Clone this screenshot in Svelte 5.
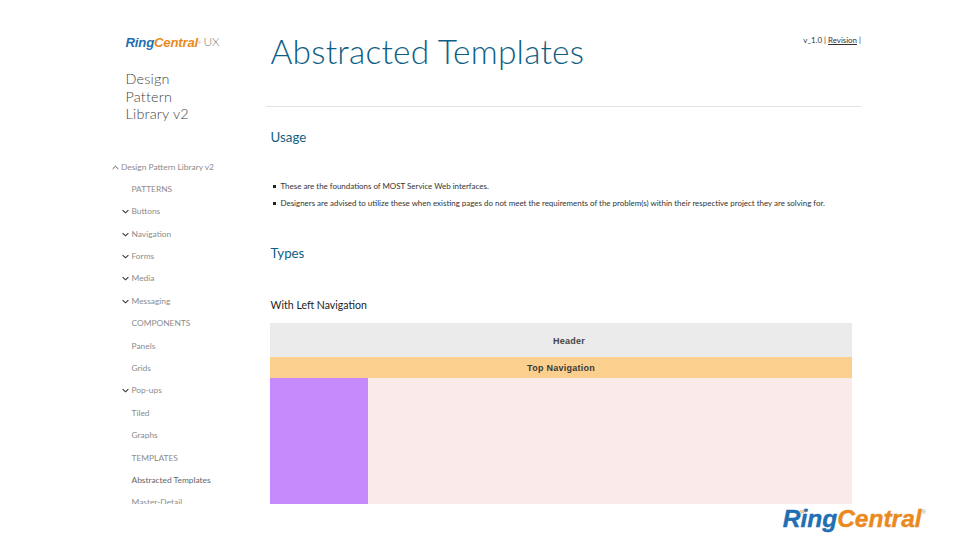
<script>
  const nav = [
    { t: 'PATTERNS', c: false },
    { t: 'Buttons', c: true },
    { t: 'Navigation', c: true },
    { t: 'Forms', c: true },
    { t: 'Media', c: true },
    { t: 'Messaging', c: true },
    { t: 'COMPONENTS', c: false },
    { t: 'Panels', c: false },
    { t: 'Grids', c: false },
    { t: 'Pop-ups', c: true },
    { t: 'Tiled', c: false },
    { t: 'Graphs', c: false },
    { t: 'TEMPLATES', c: false },
    { t: 'Abstracted Templates', c: false, active: true },
    { t: 'Master-Detail', c: false }
  ];
</script>

<div class="page">
  <div class="content">
    <aside class="sidebar">
      <div class="brand">
        <span class="rc"><span class="blue">Ring</span><span class="orange">Central</span></span><sup class="reg">®</sup>
        <span class="ux">UX</span>
      </div>
      <div class="lib">Design<br />Pattern<br />Library v2</div>
      <nav class="nav">
        <div class="row root">
          <svg class="chev" viewBox="0 0 8 5" width="7" height="5"><path d="M0.7 4.2 L4 1 L7.3 4.2" fill="none" stroke="#555" stroke-width="1.1" /></svg>
          <span>Design Pattern Library v2</span>
        </div>
        {#each nav as n}
          <div class="row item" class:active={n.active}>
            {#if n.c}
              <svg class="chev" viewBox="0 0 8 5" width="7" height="5"><path d="M0.7 0.8 L4 4 L7.3 0.8" fill="none" stroke="#333" stroke-width="1.2" /></svg>
            {/if}
            <span>{n.t}</span>
          </div>
        {/each}
      </nav>
    </aside>
    <main class="main">
      <header class="head">
        <h1>Abstracted Templates</h1>
        <div class="ver">v_1.0 | <u>Revision</u> |</div>
      </header>
      <section class="body">
        <h2 class="usage">Usage</h2>
        <ul>
          <li>These are the foundations of MOST Service Web interfaces.</li>
          <li>Designers are advised to utilize these when existing pages do not meet the requirements of the problem(s) within their respective project they are solving for.</li>
        </ul>
        <h2 class="types">Types</h2>
        <h3>With Left Navigation</h3>
        <div class="tpl">
          <div class="t-head">Header</div>
          <div class="t-nav">Top Navigation</div>
          <div class="t-main">
            <div class="t-left"></div>
          </div>
        </div>
      </section>
    </main>
  </div>
  <footer class="foot">
    <div class="logo">
      <svg class="arcs" viewBox="0 0 10 6" width="9" height="5"><path d="M1 4 Q5 0 9 4 M3 5 Q5 3 7 5" fill="none" stroke="#ea8a1e" stroke-width="1" /></svg>
      <span class="blue">Ring</span><span class="orange">Central</span><sup>®</sup>
    </div>
  </footer>
</div>

<style>
  :global(body) {
    margin: 0;
    background: #fff;
  }
  .page {
    width: 960px;
    height: 540px;
    overflow: hidden;
    font-family: Lato, "Liberation Sans", sans-serif;
    display: flex;
    flex-direction: column;
  }
  .content {
    height: 504px;
    overflow: hidden;
    display: flex;
    flex: none;
  }
  .sidebar {
    width: 266px;
    flex: none;
    box-sizing: border-box;
    padding-top: 35px;
  }
  .brand {
    margin-left: 125.5px;
    height: 14px;
    line-height: 14px;
    white-space: nowrap;
    display: flex;
    align-items: center;
  }
  .rc {
    font: italic 700 13.2px "Liberation Sans", sans-serif;
    letter-spacing: -0.2px;
  }
  .blue { color: #1f6fb2; }
  .orange { color: #ea8a1e; }
  .reg {
    font-size: 4px;
    color: #999;
    align-self: flex-start;
    margin-top: 1px;
  }
  .ux {
    font-size: 12px;
    font-weight: 300;
    color: #777;
    margin-left: 2px;
  }
  .lib {
    margin: 21px 0 0 125.5px;
    font-size: 14.4px;
    line-height: 17.5px;
    font-weight: 300;
    color: #444;
    letter-spacing: 0.2px;
  }
  .nav {
    margin-top: 33px;
    font-size: 8.4px;
    font-weight: 400;
    color: #8c8c8c;
  }
  .row {
    height: 22.4px;
    line-height: 22.4px;
    position: relative;
    white-space: nowrap;
  }
  .root { padding-left: 121px; }
  .item { padding-left: 131.5px; }
  .chev {
    position: absolute;
    top: 9px;
  }
  .root .chev { left: 111.5px; }
  .item .chev { left: 122px; }
  .active { color: #666; }
  .main {
    flex: 1;
    min-width: 0;
  }
  .head {
    width: 595px;
    height: 107px;
    box-sizing: border-box;
    border-bottom: 1px solid #e2e2e2;
    position: relative;
    padding: 29px 0 0 4.5px;
  }
  h1 {
    margin: 0;
    font-size: 33.5px;
    line-height: 44px;
    font-weight: 300;
    color: #0f5f85;
    letter-spacing: 0.2px;
  }
  .ver {
    position: absolute;
    right: 0;
    top: 34px;
    font-size: 7.9px;
    line-height: 12px;
    color: #333;
  }
  .body {
    padding-left: 4px;
    width: 582px;
  }
  h2 {
    margin: 0 0 0 0.6px;
    font-size: 13.3px;
    line-height: 20px;
    font-weight: 400;
    color: #0f5f85;
  }
  .usage { margin-top: 20px; }
  ul {
    list-style: none;
    margin: 31px 0 0;
    padding: 0;
    font-size: 7.95px;
    line-height: 17px;
    color: #333;
    white-space: nowrap;
  }
  li {
    padding-left: 10.5px;
    position: relative;
  }
  li::before {
    content: "";
    position: absolute;
    left: 3px;
    top: 7px;
    width: 3px;
    height: 3px;
    background: #222;
  }
  .types { margin-top: 31px; }
  h3 {
    margin: 34px 0 0 0.6px;
    font-size: 10.56px;
    line-height: 16px;
    font-weight: 400;
    color: #1c1c1c;
  }
  .tpl {
    margin-top: 10px;
    font: 700 9px "Liberation Sans", sans-serif;
    letter-spacing: 0.25px;
    color: #444;
    text-align: center;
  }
  .t-head {
    height: 34px;
    line-height: 36px;
    background: #ebebeb;
    padding-left: 16px;
  }
  .t-nav {
    height: 21px;
    line-height: 23px;
    background: #fbd08f;
    color: #3a3a3a;
  }
  .t-main {
    height: 300px;
    background: #faeaea;
    display: flex;
  }
  .t-left {
    width: 97.5px;
    background: #c68afc;
  }
  .foot {
    flex: 1;
    display: flex;
    justify-content: flex-end;
    align-items: flex-start;
    padding: 1px 34px 0 0;
  }
  .logo {
    font: italic 700 24.5px/28px "Liberation Sans", sans-serif;
    -webkit-text-stroke: 0.4px currentColor;
    letter-spacing: 0;
    white-space: nowrap;
    position: relative;
  }
  .arcs {
    position: absolute;
    left: 15px;
    top: 4px;
  }
  .logo sup {
    font-size: 6px;
    font-weight: 400;
    color: #999;
    vertical-align: 13px;
    line-height: 0;
    -webkit-text-stroke: 0;
  }
</style>
